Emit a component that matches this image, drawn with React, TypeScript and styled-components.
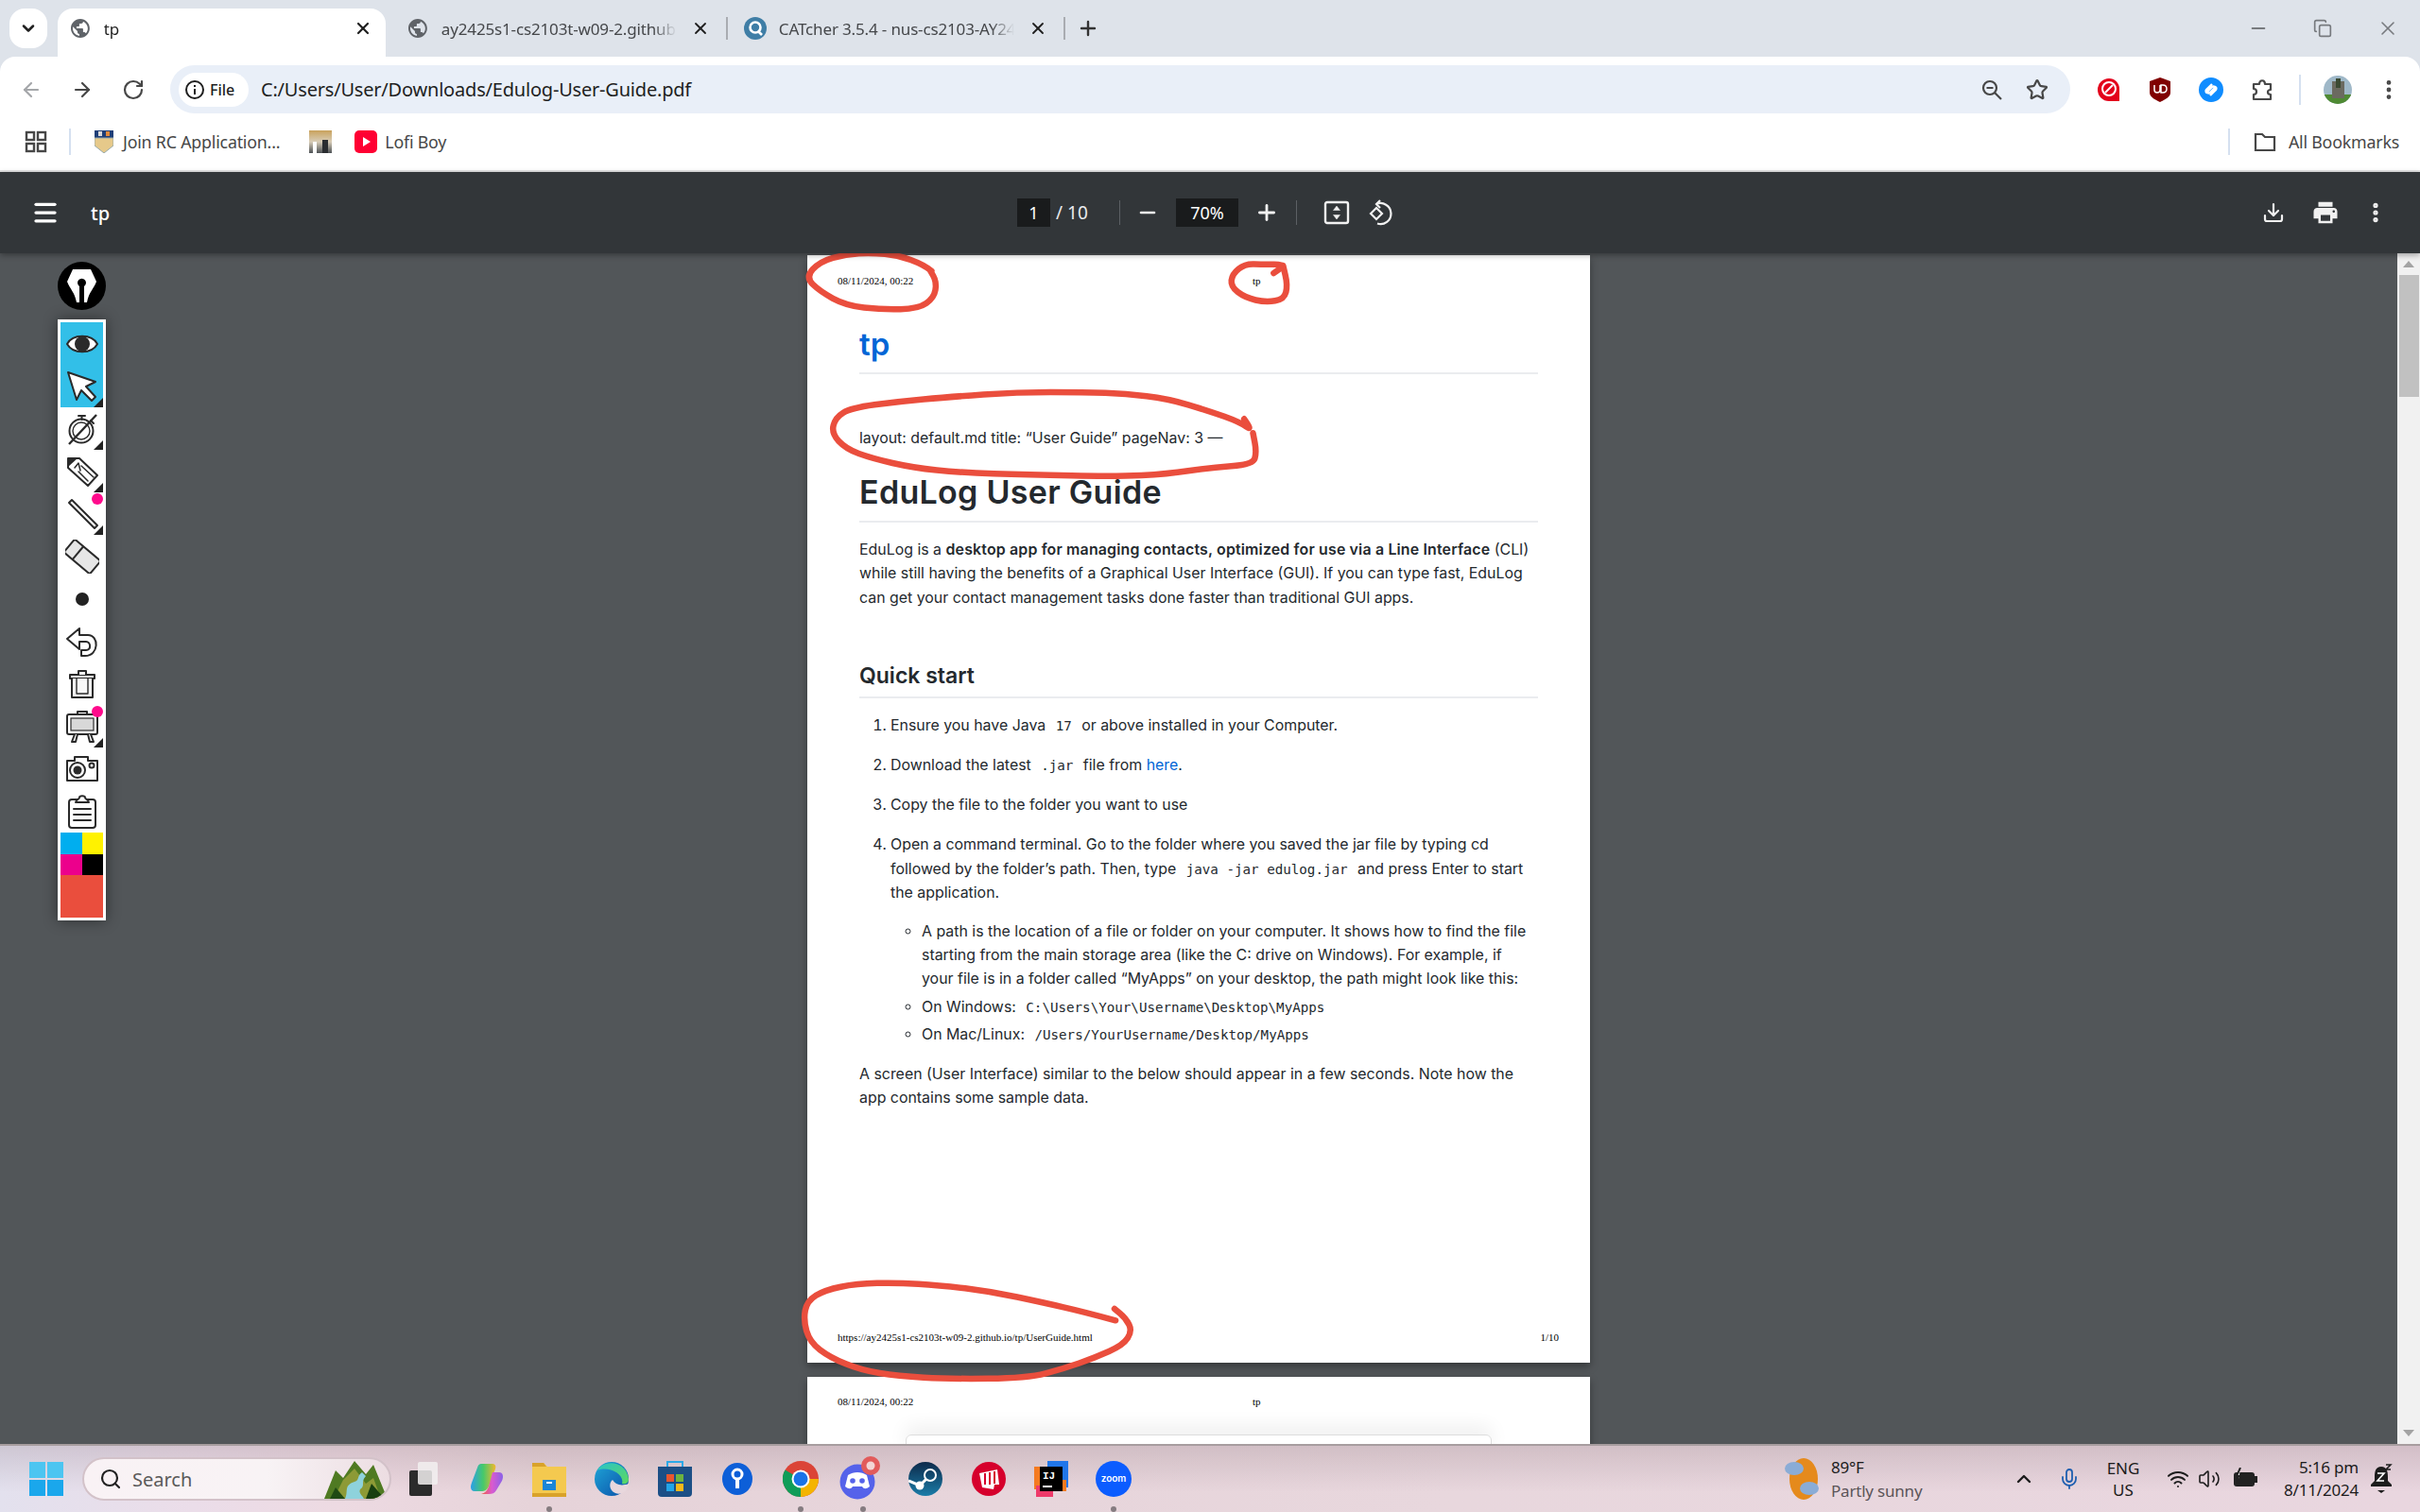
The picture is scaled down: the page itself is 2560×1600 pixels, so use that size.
import React from "react";
import styled, { createGlobalStyle } from "styled-components";
import { ArrowLeft, ArrowRight, RotateCw, Star, MoreVertical, Minus, Plus, X, ChevronDown, ChevronUp, Download, Menu, Search, Mic, Wifi, Volume2, Copy } from "lucide-react";
import { MdPublic, MdPrint } from "react-icons/md";

const Global = createGlobalStyle`
  html, body { margin: 0; padding: 0; background: #525659; }
  * { box-sizing: border-box; }
`;
const UI = `"Noto Sans", "Open Sans", sans-serif`;
const Root = styled.div`
  position: relative; width: 2560px; height: 1600px; display: flex; flex-direction: column; overflow: hidden;
  background: #dee3ea; font-family: ${UI}; color: #1f1f1f;
`;
/* ---------- tab strip ---------- */
const TabStrip = styled.div`height: 60px; padding: 9px 0 0 10px; display: flex; align-items: flex-start; flex: none; position: relative;`;
const TabSearch = styled.div`width: 40px; height: 42px; border-radius: 16px; background: #fff; display: flex; align-items: center; justify-content: center; margin-right: 11px;`;
const Tab = styled.div<{ $active?: boolean; $sep?: boolean }>`
  position: relative; width: 347px; height: ${(p) => (p.$active ? 51 : 42)}px; margin-right: 10px; padding: 0 12px; display: flex; align-items: ${(p) => (p.$active ? "flex-start" : "center")};
  padding-top: ${(p) => (p.$active ? 9 : 0)}px;
  background: ${(p) => (p.$active ? "#fff" : "transparent")}; border-radius: 16px 16px 0 0; color: ${(p) => (p.$active ? "#1f1f1f" : "#45474a")};
  &::after { content: ""; display: ${(p) => (p.$sep ? "block" : "none")}; position: absolute; right: -5px; top: 9px; width: 2px; height: 24px; background: #a9acb1; }
`;
const TabTitle = styled.div`
  margin-left: 13px; width: 251px; white-space: nowrap; overflow: hidden; font-size: 17px; letter-spacing: -0.15px; line-height: 25px;
  -webkit-mask-image: linear-gradient(90deg, #000 90%, transparent);
`;
const TabClose = styled.div`margin-left: 13px; width: 24px; height: 24px; display: flex; align-items: center; justify-content: center; color: #1f1f1f;`;
const NewTab = styled.div`width: 24px; height: 42px; display: flex; align-items: center; justify-content: center; margin-left: 7px; color: #333;`;
const WindowBtns = styled.div`margin-left: auto; display: flex; align-items: center; height: 42px; padding-right: 22px; gap: 47px; color: #777a7e;`;
/* ---------- nav ---------- */
const NavRow = styled.div`height: 69px; flex: none; background: #fff; border-radius: 16px 16px 0 0; display: flex; align-items: center; padding-left: 13px;`;
const Slot = styled.div<{ $w?: number; $ml?: number; $c?: string }>`
  flex: none; width: ${(p) => p.$w ?? 40}px; height: 32px; margin-left: ${(p) => p.$ml ?? 0}px; display: flex; align-items: center; justify-content: center; color: ${(p) => p.$c ?? "#474747"};
`;
const Omni = styled.div`flex: 1; height: 51px; margin-left: 19px; border-radius: 26px; background: #e9eff8; display: flex; align-items: center; padding: 0 19px 0 9px;`;
const Chip = styled.div`width: 74px; height: 36px; border-radius: 18px; background: #fff; display: flex; align-items: center; padding-left: 6px; gap: 5px; font-size: 16px; font-weight: 500;`;
const Url = styled.div`margin-left: 13px; font-size: 20px; letter-spacing: -0.2px; color: #1f1f1f; flex: 1; white-space: nowrap;`;
const ExtGroup = styled.div`display: flex; align-items: center; padding-left: 21px; padding-right: 13px;`;
const VSep = styled.div<{ $ml?: number; $mr?: number; $h?: number; $c?: string; $w?: number }>`
  flex: none; width: ${(p) => p.$w ?? 2}px; height: ${(p) => p.$h ?? 32}px; margin-left: ${(p) => p.$ml ?? 0}px; margin-right: ${(p) => p.$mr ?? 0}px; background: ${(p) => p.$c ?? "#d5e0f0"};
`;
/* ---------- bookmarks ---------- */
const Bookmarks = styled.div`height: 53px; flex: none; background: #fff; border-bottom: 2px solid #e4e4e4; padding-bottom: 9px; display: flex; align-items: center; padding-left: 26px; font-size: 17.8px; color: #474747; letter-spacing: -0.2px;`;
const BmText = styled.span<{ $ml?: number }>`margin-left: ${(p) => p.$ml ?? 0}px; white-space: nowrap;`;
const BmIcon = styled.div<{ $ml?: number }>`flex: none; margin-left: ${(p) => p.$ml ?? 0}px; display: flex; align-items: center;`;
const BmRight = styled.div`margin-left: auto; display: flex; align-items: center; padding-right: 22px;`;
/* ---------- pdf bar ---------- */
const PdfBar = styled.div`
  height: 86px; flex: none; background: #323639; color: #f1f1f1; display: flex; align-items: center; position: relative; z-index: 3;
  box-shadow: 0 2px 6px rgba(0,0,0,.35);
`;
const PdfLeft = styled.div`width: 1076px; flex: none; display: flex; align-items: center; padding-left: 33px;`;
const PdfTitle = styled.div`margin-left: 33px; font-size: 20px; font-weight: 500; color: #fff;`;
const PdfInput = styled.div<{ $w: number; $ml?: number }>`
  flex: none; width: ${(p) => p.$w}px; height: 30px; margin-left: ${(p) => p.$ml ?? 0}px; background: #191b1c; display: flex; align-items: center; justify-content: center; font-size: 18px; color: #fff;
`;
const PdfCount = styled.div`flex: none; width: 35px; margin-left: 6px; font-size: 19px; white-space: nowrap; color: #e8eaed;`;
const PdfRight = styled.div`margin-left: auto; display: flex; align-items: center; padding-right: 31px;`;
/* ---------- viewer ---------- */
const Viewer = styled.div`flex: 1; min-height: 0; background: #525659; display: flex; position: relative; overflow: hidden;`;
const Stage = styled.div`flex: 1; padding: 2px 0 0 854px; display: flex; flex-direction: column; gap: 15px;`;
const Page = styled.div<{ $h: number }>`
  flex: none; width: 828px; height: ${(p) => p.$h}px; background: #fff; box-shadow: 0 4px 8px rgba(0,0,0,.35); display: flex; flex-direction: column;
  font-family: Inter, "Liberation Sans", sans-serif; font-size: 15.9px; line-height: 25.2px; color: #24292e;
`;
const PrintHead = styled.div<{ $pt: number }>`
  display: grid; grid-template-columns: 439px 1fr; padding: ${(p) => p.$pt}px 33px 0 32px; font: 11px/14px "Liberation Serif", serif; color: #000;
`;
const PrintFoot = styled.div`margin-top: auto; padding: 0 33px 20px 32px; display: flex; justify-content: space-between; font: 11px/14px "Liberation Serif", serif; color: #000;`;
const Body = styled.div`padding: 0 55px; flex: 1;`;
const SiteTitle = styled.div`margin-top: 40px; height: 52px; font-size: 33px; font-weight: 600; line-height: 40px; color: #0366d6; border-bottom: 2px solid #eaecef;`;
const Front = styled.p`margin: 55px 0 0;`;
const H1 = styled.h1`margin: 23px 0 0; padding-bottom: 8px; font-size: 34px; line-height: 44px; font-weight: 600; letter-spacing: 0.3px; border-bottom: 2px solid #eaecef;`;
const Para = styled.p<{ $mt: number }>`margin: ${(p) => p.$mt}px 0 0; white-space: nowrap;`;
const Strong = styled.strong`font-weight: 600; letter-spacing: 0.17px;`;
const H2 = styled.h2`margin: 55px 0 0; padding-bottom: 7px; font-size: 23px; line-height: 30px; font-weight: 600; border-bottom: 2px solid #eaecef;`;
const Ol = styled.ol`margin: 16px 0 0; padding-left: 33px;`;
const Li = styled.li`margin-bottom: 17px; white-space: nowrap; &:last-child { margin-bottom: 0; }`;
const Ul = styled.ul`margin: 16px 0 0; padding-left: 33px; list-style: circle;`;
const SubLi = styled.li`margin-bottom: 4px; white-space: nowrap;`;
const Code = styled.code`font: 14.2px "DejaVu Sans Mono", "Liberation Mono", monospace; padding: 0 6px; color: #24292e;`;
const Anchor = styled.span`color: #0366d6;`;
const PageCard = styled.div`margin: 28px 0 0 104px; width: 620px; height: 20px; border: 1px solid #ddd; border-radius: 6px 6px 0 0; box-shadow: 0 -8px 20px rgba(0,0,0,.07);`;
/* ---------- scrollbar ---------- */
const Scroll = styled.div`width: 24px; flex: none; background: #f1f1f1; position: relative; z-index: 2; display: flex; flex-direction: column; align-items: center;`;
const ScrollBtn = styled.div`height: 23px; flex: none; display: flex; align-items: center; justify-content: center;`;
const Thumb = styled.div`width: 21px; height: 129px; background: #c1c1c1; margin-left: 1px;`;
const ScrollGap = styled.div`flex: 1;`;
/* ---------- pen tool ---------- */
const PenTools = styled.div`position: absolute; left: 61px; top: 9px; z-index: 2; display: flex; flex-direction: column; align-items: center; gap: 10px;`;
const PenPanel = styled.div`width: 51px; padding: 3px; background: #fff; box-shadow: 0 0 14px rgba(0,0,0,.45); display: flex; flex-direction: column;`;
const PenItem = styled.div<{ $on?: boolean; $tri?: boolean; $dot?: boolean }>`
  position: relative; width: 45px; height: 45px; display: flex; align-items: center; justify-content: center; background: ${(p) => (p.$on ? "#32bfe8" : "transparent")};
  ${(p) => p.$tri ? `&::after { content: ""; position: absolute; right: 0; bottom: 0; border-style: solid; border-width: 0 0 10px 10px; border-color: transparent transparent #222 transparent; }` : ""}
  ${(p) => p.$dot ? `&::before { content: ""; position: absolute; right: 0; top: 1px; width: 12px; height: 12px; border-radius: 50%; background: #ff0a8c; z-index: 1; }` : ""}
`;
const Swatches = styled.div`display: grid; grid-template-columns: 1fr 1fr;`;
const Swatch = styled.div<{ $c: string; $wide?: boolean }>`height: ${(p) => (p.$wide ? 45 : 22.5)}px; background: ${(p) => p.$c}; ${(p) => (p.$wide ? "grid-column: span 2;" : "")}`;
const Ink = styled.svg`position: absolute; left: 0; top: 0; z-index: 2; pointer-events: none;`;
/* ---------- taskbar ---------- */
const Taskbar = styled.div`
  height: 72px; flex: none; position: relative; z-index: 4; display: flex; align-items: center; border-top: 2px solid #a79d9f;
  background: linear-gradient(180deg, rgba(120,95,105,.2), rgba(255,255,255,0) 70%), linear-gradient(90deg, #e3e1ee 0%, #ebdde9 8%, #eddae2 14%, #e6d3d9 22%, #e8d7dd 60%, #e9d6df 100%);
`;
const WinSlot = styled.div`margin-left: 31px; flex: none; display: flex;`;
const SearchPill = styled.div`
  position: relative; margin-left: 20px; width: 327px; height: 46px; border-radius: 23px; flex: none; display: flex; align-items: center; padding-left: 16px; gap: 11px;
  background: linear-gradient(90deg, #f9f2f5, #f8f3f5 60%, #ecdde2); border: 2px solid #d3c2c9; font-size: 20px; color: #5a5a5a; overflow: hidden;
`;
const SearchArt = styled.div`margin-left: auto; display: flex; align-items: center; margin-right: 3px;`;
const Apps = styled.div`display: flex; margin-left: 1px;`;
const App = styled.div<{ $run?: boolean }>`
  position: relative; width: 66.4px; height: 44px; display: flex; align-items: center; justify-content: center;
  ${(p) => p.$run ? `&::after { content: ""; position: absolute; left: 50%; margin-left: -3px; bottom: -13px; width: 6px; height: 6px; border-radius: 50%; background: #857c80; }` : ""}
`;
const Tray = styled.div`margin-left: auto; display: flex; align-items: center; padding-right: 29px; color: #1c1c1c;`;
const Weather = styled.div`margin-left: 10px; width: 97px; font-size: 17px; line-height: 25px; white-space: nowrap; letter-spacing: -0.2px;`;
const WeatherSub = styled.div`color: #5b5458;`;
const Lang = styled.div`margin-left: 20px; width: 50px; text-align: center; font-size: 17px; line-height: 23px;`;
const Clock = styled.div`margin-left: 16px; width: 90px; text-align: right; font-size: 17px; line-height: 24px; white-space: nowrap; letter-spacing: -0.2px;`;

/* ---------- drawings ---------- */
const smooth = (pts: number[][]) => {
  let d = `M${pts[0][0].toFixed(1)} ${pts[0][1].toFixed(1)}`;
  for (let i = 1; i < pts.length - 1; i++) {
    const mx = (pts[i][0] + pts[i + 1][0]) / 2, my = (pts[i][1] + pts[i + 1][1]) / 2;
    d += ` Q${pts[i][0].toFixed(1)} ${pts[i][1].toFixed(1)} ${mx.toFixed(1)} ${my.toFixed(1)}`;
  }
  const l = pts[pts.length - 1];
  return d + ` L${l[0].toFixed(1)} ${l[1].toFixed(1)}`;
};
const topMap = (a: number[]) => [840 + a[0] / 1.823, 265 + a[1] / 3];
const botMap = (a: number[]) => [840 + a[0] / 1.823, 1340 + a[1] / 3];
const INK = [
  [[265,65],[250,45],[200,15],[150,8],[100,12],[50,35],[22,85],[50,130],[100,175],[170,188],[240,185],[270,150],[275,100],[262,62]].map(topMap),
  [[925,72],[935,62],[945,44],[905,45],[870,42],[845,75],[842,115],[870,150],[910,165],[945,155],[952,110],[943,48]].map(topMap),
  [[868,535],[885,575],[860,545],[800,510],[720,470],[640,455],[560,450],[430,450],[300,465],[200,480],[110,500],[80,530],[72,580],[100,630],[150,660],[230,690],[320,705],[450,712],[620,718],[720,710],[800,690],[885,680],[892,640],[885,580]].map(topMap),
  [[620,172],[560,145],[480,115],[380,80],[280,60],[200,52],[120,55],[60,75],[25,110],[18,170],[30,240],[70,290],[130,330],[200,348],[300,358],[450,355],[520,325],[580,290],[635,250],[652,205],[640,165],[618,135]].map(botMap),
];

const S = { fill: "#fff", stroke: "#2a2a2a", strokeWidth: 2, strokeLinejoin: "round" as const, strokeLinecap: "round" as const };
const I = ({ children }: { children: React.ReactNode }) => <svg width="36" height="36" viewBox="0 0 36 36">{children}</svg>;
const Eye = () => <I><path d="M2 18C8 7 28 7 34 18C28 29 8 29 2 18Z" {...S} /><circle cx="18" cy="18" r="8" fill="#2a2a2a" /></I>;
const Cursor = () => <I><path d="M3 3L32 13L22 18L32 29L28 33L17 22L12 32Z" {...S} /></I>;
const Watch = () => <I><circle cx="17" cy="20" r="12.5" {...S} /><circle cx="17" cy="20" r="9" {...S} strokeWidth={1.4} /><path d="M14 4H21M17.5 4V8M27 9L30 12" {...S} /><path d="M4 34L33 3" stroke="#2a2a2a" strokeWidth="2.4" /></I>;
const Marker = () => <I><path d="M3 4H15L34 22L24 33L3 14Z" {...S} /><path d="M3 4H13L3 13Z" fill="#2a2a2a" /><path d="M10 14L14 9L16 17M14 18L24 28M17 12L30 24" {...S} fill="none" strokeWidth={1.5} /></I>;
const Line = () => <I><path d="M4 6L7 3L34 30L31 33Z" {...S} /></I>;
const Eraser = () => <I><g transform="rotate(40 18 18)"><rect x="0" y="9" width="36" height="18" rx="2" fill="#e6e6e6" stroke="#2a2a2a" strokeWidth="2" /><path d="M12 9V27" stroke="#2a2a2a" strokeWidth="2" /></g></I>;
const Dot = () => <svg width="16" height="16"><circle cx="8" cy="8" r="7" fill="#222" /></svg>;
const Undo = () => <I><path d="M2 15L15 4V11H24C36 11 36 33 21 33H17V27H22C28 27 27 18 22 18H15V26Z" {...S} /></I>;
const Trash = () => <I><path d="M5 8H31V12H5Z" {...S} fill="#eee" /><path d="M14 8V4H22V8" {...S} /><path d="M7 12V32H29V12" {...S} fill="#f0f0f0" /><path d="M12 12V28H24V12" {...S} fill="#f8f8f8" strokeWidth={1.4} /></I>;
const Easel = () => <I><path d="M13 5V2H23V5" {...S} /><rect x="2" y="5" width="32" height="21" rx="2" {...S} /><rect x="6" y="9" width="24" height="13" fill="#d8d8d8" stroke="#2a2a2a" strokeWidth="1.2" /><path d="M10 26L7 34H11L13 26M24 26L26 34H30L27 26" {...S} /></I>;
const Camera = () => <I><path d="M2 9H10V5H24V9H34V30H2Z" {...S} /><circle cx="13" cy="19" r="8" {...S} /><circle cx="13" cy="19" r="4.5" fill="#2a2a2a" /><circle cx="28" cy="14" r="2.5" {...S} /></I>;
const Clip = () => <I><rect x="4" y="5" width="28" height="30" rx="3" {...S} /><path d="M11 8C12 4 15 5 15 3C15 0.5 21 0.5 21 3C21 5 24 4 25 8Z" {...S} /><path d="M9 15H27M9 21H27M9 27H27" {...S} /></I>;
const NibBadge = () => (
  <svg width="51" height="51" viewBox="0 0 51 51"><circle cx="25.5" cy="25.5" r="25.5" fill="#000" />
    <path d="M16 8H35L41 21C38 29 33 32 31 43H28V26A4.5 4.5 0 1 0 23 26V43H20C18 32 13 29 10 21Z" fill="#fff" /></svg>
);
const WinLogo = () => <svg width="36" height="36"><g fill="#1aa7ec"><rect width="17" height="17" x="0" y="0" fill="#4cc5f1" /><rect width="17" height="17" x="19" y="0" fill="#4cc5f1" /><rect width="17" height="17" x="0" y="19" /><rect width="17" height="17" x="19" y="19" /></g></svg>;
const Globe = ({ c }: { c: string }) => <MdPublic size={24} color={c} />;
const TaskView = () => <svg width="30" height="36"><rect x="0" y="9" width="24" height="27" rx="2" fill="#2b2b2b" /><rect x="9" y="0" width="21" height="24" rx="2" fill="#f2f0f0" opacity=".85" /></svg>;
const Copilot = () => (
  <svg width="36" height="36" viewBox="0 0 36 36"><defs><linearGradient id="cp1" x1="0" x2="1"><stop offset="0" stopColor="#2a9fe8" /><stop offset=".5" stopColor="#46c96a" /><stop offset="1" stopColor="#f2b82e" /></linearGradient><linearGradient id="cp2" x1="0" x2="1"><stop offset="0" stopColor="#f0603c" /><stop offset=".5" stopColor="#d95ad0" /><stop offset="1" stopColor="#8a62e8" /></linearGradient></defs>
    <path d="M12 2H24C28 2 28 6 26 10L20 26C18 30 16 31 12 31H5C1 31 0 27 2 22L8 6C9 3 10 2 12 2Z" fill="url(#cp1)" /><path d="M24 11H31C35 11 36 15 34 20L28 30C26 33 24 34 20 34H12C16 33 18 31 20 26Z" fill="url(#cp2)" /></svg>
);
const Explorer = () => <svg width="36" height="38"><path d="M0 2H12L16 6H36V38H0Z" fill="#f4c94f" /><path d="M0 2H12L15 6H0Z" fill="#d9a22a" /><rect y="34" width="36" height="4" fill="#d9a22a" /><path d="M11 20H25V31H11Z" fill="#1a86d8" /><rect x="15" y="22" width="6" height="2" fill="#fff" /></svg>;
const Edge = () => (
  <svg width="36" height="36" viewBox="0 0 36 36"><defs><linearGradient id="e1" x1="0" y1="0" x2="1" y2="1"><stop offset="0" stopColor="#1ea7d8" /><stop offset="1" stopColor="#0b4fa8" /></linearGradient><linearGradient id="e2" x1="0" y1="0" x2="1" y2="1"><stop offset="0" stopColor="#2bc4c6" /><stop offset="1" stopColor="#5dd860" /></linearGradient></defs>
    <circle cx="18" cy="18" r="18" fill="url(#e1)" /><path d="M3 9C8 -2 33 -3 36 18C36 22 33 24 29 23C32 12 14 4 3 9Z" fill="url(#e2)" /><path d="M36 23C28 26 22 24 19 19C15 22 15 30 22 33C28 36 36 30 36 23Z" fill="#e8d7dd" /></svg>
);
const Store = () => <svg width="36" height="38"><path d="M10 6V1H26V6" fill="none" stroke="#2aa8e8" strokeWidth="2" /><path d="M0 6H36V34Q36 38 32 38H4Q0 38 0 34Z" fill="#1c4f86" /><rect x="9" y="14" width="8" height="8" fill="#e8562e" /><rect x="19" y="14" width="8" height="8" fill="#6cb33f" /><rect x="9" y="24" width="8" height="8" fill="#22a5e8" /><rect x="19" y="24" width="8" height="8" fill="#f6b81a" /></svg>;
const Maps = () => <svg width="32" height="36"><ellipse cx="16" cy="18" rx="16" ry="17" fill="#0d5fd8" /><circle cx="16" cy="13" r="5" fill="none" stroke="#fff" strokeWidth="3" /><rect x="14" y="18" width="4" height="10" fill="#fff" /></svg>;
const Chrome = () => (
  <svg width="38" height="38" viewBox="0 0 38 38"><circle cx="19" cy="19" r="19" fill="#db4437" /><path d="M19 19L2.5 9.5A19 19 0 0 0 19 38Z" fill="#0f9d58" /><path d="M19 19H37.9A19 19 0 0 1 19 38Z" fill="#f4b400" /><circle cx="19" cy="19" r="9.5" fill="#fff" /><circle cx="19" cy="19" r="7.5" fill="#1a73e8" /></svg>
);
const Discord = () => (
  <svg width="50" height="48" viewBox="0 0 50 48" style={{ overflow: "visible" }}><circle cx="19" cy="27" r="18.5" fill="#5562ea" /><path d="M9 20C15 16 23 16 29 20L32 32C28 35 26 35 24 32H14C12 35 10 35 6 32Z" fill="#fff" /><circle cx="14" cy="26" r="2.8" fill="#5562ea" /><circle cx="24" cy="26" r="2.8" fill="#5562ea" /><circle cx="33" cy="10" r="10" fill="#e25b5b" /><circle cx="33" cy="10" r="4.5" fill="#f3d5d5" /></svg>
);
const Steam = () => <svg width="36" height="36"><defs><linearGradient id="st" x1="0" x2="0" y1="0" y2="1"><stop offset="0" stopColor="#0d2a4a" /><stop offset="1" stopColor="#1a7ca8" /></linearGradient></defs><circle cx="18" cy="18" r="18" fill="url(#st)" /><circle cx="23" cy="14" r="6" fill="none" stroke="#fff" strokeWidth="2" /><path d="M0 20L12 25L19 18" fill="none" stroke="#fff" strokeWidth="3" /><circle cx="12" cy="25" r="4.5" fill="#fff" /></svg>;
const Riot = () => <svg width="36" height="36"><circle cx="18" cy="18" r="18" fill="#d6002c" /><path d="M8 12L27 8L29 24H24L23 29L11 27Z" fill="#fff" /><path d="M14 12V24M19 11V24M24 10V23" stroke="#d6002c" strokeWidth="2" /></svg>;
const IntelliJ = () => (
  <svg width="36" height="38"><rect x="14" y="0" width="22" height="28" fill="#2076ea" /><rect x="0" y="6" width="8" height="24" fill="#f47a20" /><rect x="26" y="20" width="8" height="12" fill="#f47a20" /><rect x="2" y="26" width="18" height="12" fill="#ee3a6a" /><rect x="6" y="6" width="24" height="26" fill="#000" /><text x="9" y="19" fontSize="11" fontFamily="Liberation Mono" fontWeight="700" fill="#fff">IJ</text><rect x="9" y="26" width="10" height="2" fill="#fff" /></svg>
);
const Zoom = () => <svg width="38" height="38"><circle cx="19" cy="19" r="19" fill="#0b5cff" /><text x="19" y="22" textAnchor="middle" fontFamily="Inter" fontWeight="600" fontSize="10" fill="#fff">zoom</text></svg>;
const Landscape = () => (
  <svg width="66" height="42" viewBox="0 0 66 42"><path d="M0 42L12 12L20 20L32 2L44 16L52 6L66 40V42Z" fill="#4f7a22" /><path d="M10 42L20 22L32 10L44 26L52 20L60 42Z" fill="#a8a83e" opacity=".7" /><path d="M44 42L50 26L64 42Z" fill="#173f10" /><path d="M6 42L12 30L22 42Z" fill="#1f4a14" /><path d="M22 42C26 34 20 28 32 24C38 22 34 18 40 14L44 18C38 24 44 28 38 32C36 36 40 38 42 42Z" fill="#8ed2dc" /></svg>
);
const WeatherIcon = () => (
  <svg width="40" height="46" viewBox="0 0 40 46"><ellipse cx="21" cy="23" rx="15" ry="22" fill="#e58a1c" /><ellipse cx="11" cy="12" rx="10" ry="7" fill="#8aacd6" /><ellipse cx="27" cy="33" rx="10" ry="7" fill="#8aacd6" /></svg>
);
const Battery = () => <svg width="28" height="24"><rect x="2" y="5" width="22" height="15" rx="3" fill="#222" /><rect x="24" y="9" width="3" height="7" fill="#222" /><path d="M9 0L5 9H9L7 15" stroke="#222" strokeWidth="2" fill="#fff" /></svg>;
const Bell = () => <svg width="24" height="32" viewBox="0 0 24 32"><path d="M12 3C6 3 5 8 5 14V18L1 22V24H23V22L19 18V14C19 8 18 3 12 3Z" fill="#1c1c1c" /><path d="M8 28H16L12 31Z" fill="#1c1c1c" /><path d="M8 10H15L8 18H15" stroke="#fff" strokeWidth="1.6" fill="none" /><path d="M17 1H22L17 6H22" stroke="#1c1c1c" strokeWidth="1.5" fill="none" /></svg>;
const Apps4 = () => <svg width="24" height="24" fill="none" stroke="#474747" strokeWidth="2.4"><rect x="2" y="2" width="8" height="8" /><rect x="14" y="2" width="8" height="8" /><rect x="2" y="14" width="8" height="8" /><rect x="14" y="14" width="8" height="8" /></svg>;
const Crest = () => <svg width="20" height="24"><rect width="20" height="8" fill="#1f3f78" /><path d="M0 8H20V16L10 24L0 16Z" fill="#e6c98a" stroke="#9aa" /><rect x="4" y="1" width="4" height="5" fill="#d9d9d9" /><rect x="12" y="1" width="4" height="5" fill="#e08a3c" /></svg>;
const Thumb2 = () => <svg width="24" height="24"><defs><linearGradient id="tb" x1="0" x2="0" y1="0" y2="1"><stop offset="0" stopColor="#c9a25c" /><stop offset=".5" stopColor="#d8cdb8" /><stop offset="1" stopColor="#4d5256" /></linearGradient></defs><rect width="24" height="24" fill="url(#tb)" /><rect x="4" y="12" width="4" height="12" fill="#fff" /><rect x="14" y="10" width="6" height="14" fill="#2a2d30" /></svg>;
const Yt = () => <svg width="24" height="24"><rect width="24" height="24" rx="5" fill="#ff0033" /><path d="M9 7L17 12L9 17Z" fill="#fff" /></svg>;
const FolderI = () => <svg width="24" height="24" fill="none" stroke="#474747" strokeWidth="2.2"><path d="M2 4H9L12 7H22V21H2Z" /></svg>;
const InfoI = () => <svg width="22" height="22" fill="none" stroke="#1f1f1f" strokeWidth="2"><circle cx="11" cy="11" r="9" /><path d="M11 10V16M11 6V8" /></svg>;
const ZoomOutI = () => <svg width="24" height="24" fill="none" stroke="#474747" strokeWidth="2.2"><circle cx="10" cy="10" r="7" /><path d="M15 15L22 22M6.5 10H13.5" /></svg>;
const ExtRed = () => <svg width="24" height="26"><path d="M12 1A11 11 0 0 1 23 12V25H12A12 12 0 0 1 12 1Z" fill="#e3001b" /><circle cx="12" cy="12" r="7" fill="none" stroke="#fff" strokeWidth="2" /><path d="M8 16L16 8" stroke="#fff" strokeWidth="2" /></svg>;
const UBlock = () => <svg width="22" height="26"><path d="M11 0L22 4V16C22 21 15 24 11 26C7 24 0 21 0 16V4Z" fill="#800000" /><path d="M5 8V13Q5 16 8 16T11 13V8M12 8V16H14Q18 16 18 12T14 8Z" stroke="#fff" strokeWidth="1.5" fill="none" /></svg>;
const Shazam = () => <svg width="26" height="26"><circle cx="13" cy="13" r="13" fill="#0f8cff" /><path d="M14 7L8 13C6 16 11 18 13 15L17 11M12 19L18 13C20 10 15 8 13 11L9 15" stroke="#fff" strokeWidth="2.4" fill="none" /></svg>;
const Puzzle2 = () => <svg width="24" height="24" fill="none" stroke="#474747" strokeWidth="2.2" strokeLinejoin="round"><path d="M3 6H9C9 1 15 1 15 6H21V12C17 12 17 17 21 17V22H3V17C7 17 7 11 3 11Z" /></svg>;
const Avatar = () => <svg width="30" height="30"><defs><clipPath id="av"><circle cx="15" cy="15" r="15" /></clipPath></defs><g clipPath="url(#av)"><rect width="30" height="30" fill="#9fb8c8" /><rect y="20" width="30" height="10" fill="#4f8a34" /><rect x="9" y="6" width="13" height="18" fill="#6b6a60" /><rect x="13" y="3" width="5" height="10" fill="#3b4a33" /></g></svg>;
const FitI = () => <svg width="28" height="28" fill="none" stroke="#f1f1f1" strokeWidth="2.4"><rect x="2" y="3" width="24" height="22" rx="2" /><path d="M14 7L10.5 11.5H17.5ZM14 21L10.5 16.5H17.5Z" fill="#f1f1f1" strokeWidth="0.5" /></svg>;
const RotI = () => <svg width="28" height="28" fill="none" stroke="#f1f1f1" strokeWidth="2.2"><path d="M3 15L9 9L15 15L9 21Z" /><path d="M9 5A11 11 0 1 1 10 25.5" /><path d="M13 1L9 5L13 9" /></svg>;
const TabCatcher = () => <svg width="24" height="24"><circle cx="12" cy="12" r="12" fill="#3f7ea6" /><circle cx="12" cy="11" r="5.5" fill="none" stroke="#fff" strokeWidth="2.6" /><path d="M15 15L19 19" stroke="#fff" strokeWidth="2.6" /></svg>;
const Tri = ({ down }: { down?: boolean }) => <svg width="12" height="7"><path d={down ? "M0 0H12L6 7Z" : "M0 7H12L6 0Z"} fill="#a3a3a3" /></svg>;

const Sheet = () => (
  <Page $h={1172}>
    <PrintHead $pt={20}><span>08/11/2024, 00:22</span><span>tp</span></PrintHead>
    <Body>
      <SiteTitle>tp</SiteTitle>
      <Front>layout: default.md title: “User Guide” pageNav: 3 —</Front>
      <H1>EduLog User Guide</H1>
      <Para $mt={16}>
        EduLog is a <Strong>desktop app for managing contacts, optimized for use via a Line Interface</Strong> (CLI)<br />
        while still having the benefits of a Graphical User Interface (GUI). If you can type fast, EduLog<br />
        can get your contact management tasks done faster than traditional GUI apps.
      </Para>
      <H2>Quick start</H2>
      <Ol>
        <Li>Ensure you have Java <Code>17</Code> or above installed in your Computer.</Li>
        <Li>Download the latest <Code>.jar</Code> file from <Anchor>here</Anchor>.</Li>
        <Li>Copy the file to the folder you want to use</Li>
        <Li>
          Open a command terminal. Go to the folder where you saved the jar file by typing cd<br />
          followed by the folder’s path. Then, type <Code>java -jar edulog.jar</Code> and press Enter to start<br />
          the application.
          <Ul>
            <SubLi>
              A path is the location of a file or folder on your computer. It shows how to find the file<br />
              starting from the main storage area (like the C: drive on Windows). For example, if<br />
              your file is in a folder called “MyApps” on your desktop, the path might look like this:
            </SubLi>
            <SubLi>On Windows: <Code>C:\Users\Your\Username\Desktop\MyApps</Code></SubLi>
            <SubLi>On Mac/Linux: <Code>/Users/YourUsername/Desktop/MyApps</Code></SubLi>
          </Ul>
        </Li>
      </Ol>
      <Para $mt={17}>
        A screen (User Interface) similar to the below should appear in a few seconds. Note how the<br />
        app contains some sample data.
      </Para>
    </Body>
    <PrintFoot><span>https://ay2425s1-cs2103t-w09-2.github.io/tp/UserGuide.html</span><span>1/10</span></PrintFoot>
  </Page>
);

export default function AppRoot() {
  return (
    <Root>
      <Global />
      <TabStrip>
        <TabSearch><ChevronDown size={20} strokeWidth={3} color="#1f1f1f" /></TabSearch>
        <Tab $active><Globe c="#5f6368" /><TabTitle>tp</TabTitle><TabClose><X size={20} strokeWidth={2.6} /></TabClose></Tab>
        <Tab $sep><Globe c="#5f6368" /><TabTitle>ay2425s1-cs2103t-w09-2.github.io/tp</TabTitle><TabClose><X size={20} strokeWidth={2.2} /></TabClose></Tab>
        <Tab $sep><TabCatcher /><TabTitle>CATcher 3.5.4 - nus-cs2103-AY2425S1</TabTitle><TabClose><X size={20} strokeWidth={2.2} /></TabClose></Tab>
        <NewTab><Plus size={24} strokeWidth={2.4} /></NewTab>
        <WindowBtns><Minus size={22} strokeWidth={2} /><Copy size={20} strokeWidth={2} /><X size={24} strokeWidth={1.6} /></WindowBtns>
      </TabStrip>
      <NavRow>
        <Slot $c="#a5a7aa"><ArrowLeft size={24} strokeWidth={2.2} /></Slot>
        <Slot $ml={14}><ArrowRight size={24} strokeWidth={2.2} /></Slot>
        <Slot $ml={14}><RotateCw size={24} strokeWidth={2.2} /></Slot>
        <Omni>
          <Chip><InfoI />File</Chip>
          <Url>C:/Users/User/Downloads/Edulog-User-Guide.pdf</Url>
          <Slot $w={32}><ZoomOutI /></Slot>
          <Slot $w={32} $ml={16}><Star size={24} strokeWidth={2.2} /></Slot>
        </Omni>
        <ExtGroup>
          <Slot><ExtRed /></Slot>
          <Slot $ml={14}><UBlock /></Slot>
          <Slot $ml={14}><Shazam /></Slot>
          <Slot $ml={14}><Puzzle2 /></Slot>
          <VSep $ml={19} $mr={19} />
          <Slot $w={40}><Avatar /></Slot>
          <Slot $ml={14}><MoreVertical size={26} strokeWidth={2.4} /></Slot>
        </ExtGroup>
      </NavRow>
      <Bookmarks>
        <BmIcon><Apps4 /></BmIcon>
        <VSep $ml={23} $h={28} />
        <BmIcon $ml={25}><Crest /></BmIcon>
        <BmText $ml={10}>Join RC Application...</BmText>
        <BmIcon $ml={31}><Thumb2 /></BmIcon>
        <BmIcon $ml={24}><Yt /></BmIcon>
        <BmText $ml={8}>Lofi Boy</BmText>
        <BmRight>
          <VSep $h={28} />
          <BmIcon $ml={25}><FolderI /></BmIcon>
          <BmText $ml={13}>All Bookmarks</BmText>
        </BmRight>
      </Bookmarks>
      <PdfBar>
        <PdfLeft><Menu size={30} strokeWidth={2.6} color="#fff" /><PdfTitle>tp</PdfTitle></PdfLeft>
        <PdfInput $w={35}>1</PdfInput>
        <PdfCount>/ 10</PdfCount>
        <VSep $ml={32} $h={26} $c="#5c6064" $w={1} />
        <Slot $w={32} $ml={13} $c="#f1f1f1"><Minus size={24} strokeWidth={2.6} /></Slot>
        <PdfInput $w={66} $ml={14}>70%</PdfInput>
        <Slot $w={32} $ml={14} $c="#f1f1f1"><Plus size={26} strokeWidth={2.6} /></Slot>
        <VSep $ml={15} $h={26} $c="#5c6064" $w={1} />
        <Slot $w={32} $ml={26}><FitI /></Slot>
        <Slot $w={32} $ml={15}><RotI /></Slot>
        <PdfRight>
          <Slot $w={32} $c="#f1f1f1"><Download size={24} strokeWidth={2.2} /></Slot>
          <Slot $w={32} $ml={23} $c="#f1f1f1"><MdPrint size={30} /></Slot>
          <Slot $w={32} $ml={21} $c="#f1f1f1"><MoreVertical size={26} strokeWidth={2.8} /></Slot>
        </PdfRight>
      </PdfBar>
      <Viewer>
        <PenTools>
          <NibBadge />
          <PenPanel>
            <PenItem $on><Eye /></PenItem>
            <PenItem $on $tri><Cursor /></PenItem>
            <PenItem $tri><Watch /></PenItem>
            <PenItem $tri><Marker /></PenItem>
            <PenItem $tri $dot><Line /></PenItem>
            <PenItem><Eraser /></PenItem>
            <PenItem><Dot /></PenItem>
            <PenItem><Undo /></PenItem>
            <PenItem><Trash /></PenItem>
            <PenItem $tri $dot><Easel /></PenItem>
            <PenItem><Camera /></PenItem>
            <PenItem><Clip /></PenItem>
            <Swatches>
              <Swatch $c="#00aeef" /><Swatch $c="#fff200" /><Swatch $c="#ec008c" /><Swatch $c="#000" /><Swatch $c="#ea4e3d" $wide />
            </Swatches>
          </PenPanel>
        </PenTools>
        <Stage>
          <Sheet />
          <Page $h={200}>
            <PrintHead $pt={19}><span>08/11/2024, 00:22</span><span>tp</span></PrintHead>
            <PageCard />
          </Page>
        </Stage>
        <Scroll>
          <ScrollBtn><Tri /></ScrollBtn>
          <Thumb />
          <ScrollGap />
          <ScrollBtn><Tri down /></ScrollBtn>
        </Scroll>
      </Viewer>
      <Taskbar>
        <WinSlot><WinLogo /></WinSlot>
        <SearchPill>
          <Search size={24} strokeWidth={2.2} color="#222" />
          Search
          <SearchArt><Landscape /></SearchArt>
        </SearchPill>
        <Apps>
          <App><TaskView /></App>
          <App><Copilot /></App>
          <App $run><Explorer /></App>
          <App><Edge /></App>
          <App><Store /></App>
          <App><Maps /></App>
          <App $run><Chrome /></App>
          <App $run><Discord /></App>
          <App><Steam /></App>
          <App><Riot /></App>
          <App><IntelliJ /></App>
          <App $run><Zoom /></App>
        </Apps>
        <Tray>
          <WeatherIcon />
          <Weather>89°F<WeatherSub>Partly sunny</WeatherSub></Weather>
          <Slot $w={24} $ml={95} $c="#1c1c1c"><ChevronUp size={24} strokeWidth={2.4} /></Slot>
          <Slot $w={24} $ml={24} $c="#1f5fb0"><Mic size={26} strokeWidth={1.8} /></Slot>
          <Lang>ENG<br />US</Lang>
          <Slot $w={24} $ml={21} $c="#1c1c1c"><Wifi size={24} strokeWidth={2} /></Slot>
          <Slot $w={24} $ml={9} $c="#1c1c1c"><Volume2 size={24} strokeWidth={1.6} /></Slot>
          <Slot $w={28} $ml={12}><Battery /></Slot>
          <Clock>5:16 pm<br />8/11/2024</Clock>
          <Slot $w={24} $ml={12}><Bell /></Slot>
        </Tray>
      </Taskbar>
      <Ink width="2560" height="1600" viewBox="0 0 2560 1600">
        {INK.map((p, i) => (
          <path key={i} d={smooth(p)} fill="none" stroke="#ea4e3d" strokeWidth="6.5" strokeLinecap="round" strokeLinejoin="round" />
        ))}
      </Ink>
    </Root>
  );
}
